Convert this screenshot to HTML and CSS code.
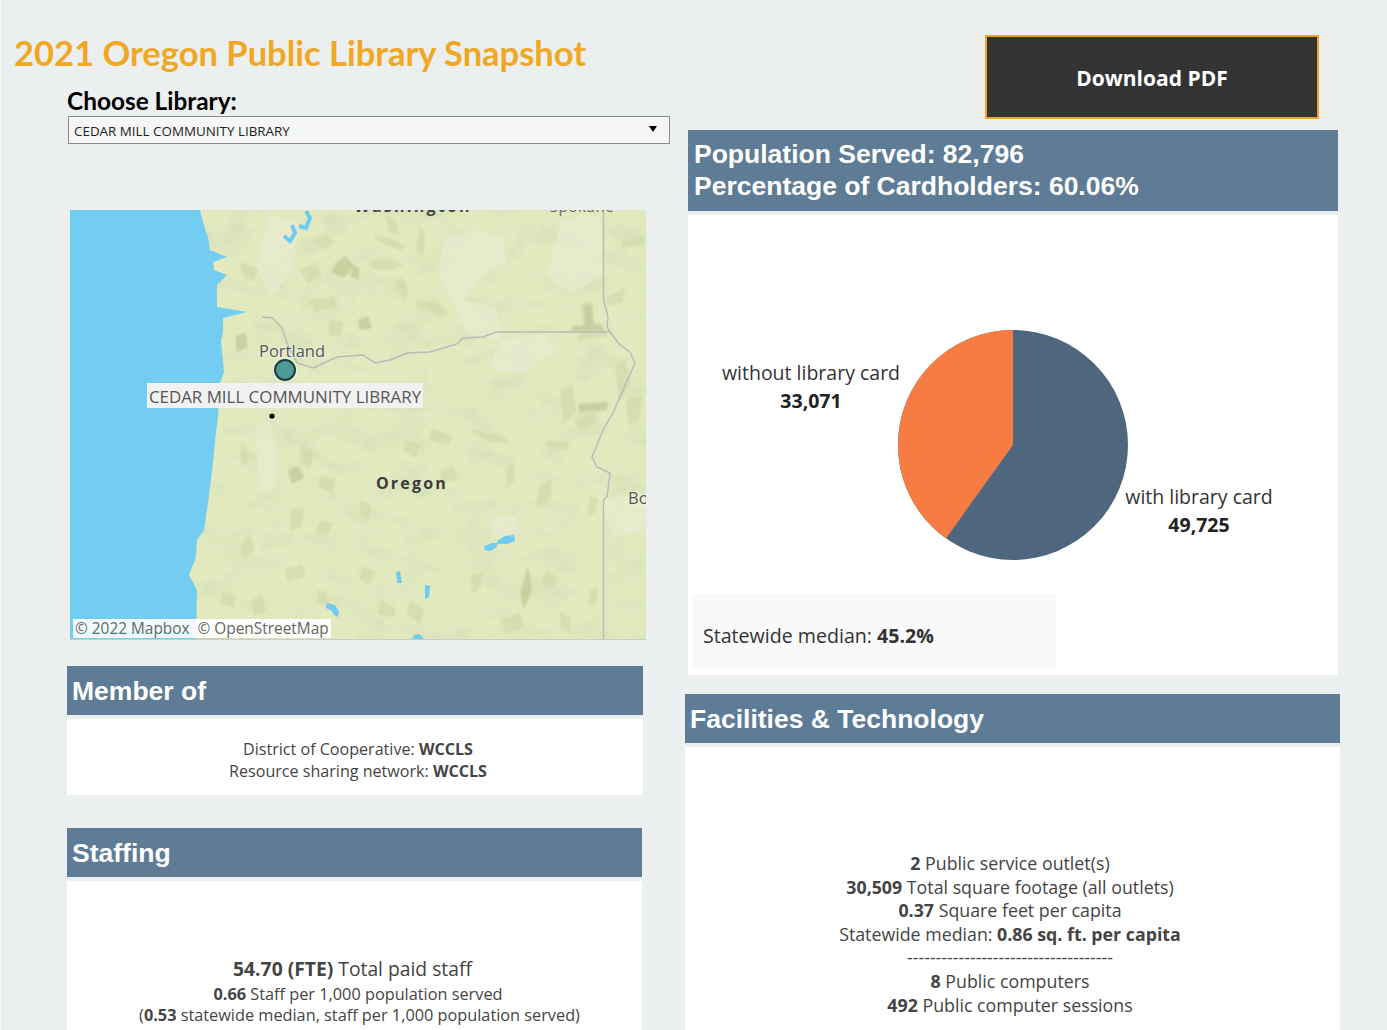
FILE: index.html
```html
<!DOCTYPE html>
<html lang="en">
<head>
<meta charset="utf-8">
<title>2021 Oregon Public Library Snapshot</title>
<link rel="stylesheet" href="styles.css">
</head>
<body>
<div class="page">
  <div class="left">
    <h1 class="title">2021 Oregon Public Library Snapshot</h1>
    <div class="filter">
      <div class="filter-label">Choose Library:</div>
      <div class="select"><span>CEDAR MILL COMMUNITY LIBRARY</span><i class="caret"></i></div>
    </div>
    <div class="map">
      <svg class="map-svg" viewBox="70 210 576 430" width="576" height="430">
        <defs>
          <filter id="soft"><feGaussianBlur stdDeviation="0.8"/></filter>
          <filter id="terrain" x="0" y="0" width="100%" height="100%">
            <feTurbulence type="fractalNoise" baseFrequency="0.028 0.04" numOctaves="3" seed="11"/>
            <feColorMatrix type="matrix" values="0 0 0 0 0.62  0 0 0 0 0.68  0 0 0 0 0.44  2.4 0 0 0 -0.95"/>
            <feComponentTransfer>
              <feFuncA type="discrete" tableValues="0 0 0.1 0.2 0.3 0.42"/>
            </feComponentTransfer>
            <feGaussianBlur stdDeviation="0.6"/>
          </filter>
        </defs>
        <rect x="70" y="210" width="576" height="430" fill="#e2e9bf"/>
        <rect x="70" y="210" width="576" height="430" filter="url(#terrain)"/>
        <g filter="url(#soft)">
          <g fill="#e9ebd0" opacity=".75">
            <path d="M445 238l35-8 24 10 2 22-28 14-14 24 32 8 6 32-34-6-16-32-14-28z"/>
            <path d="M560 220l40-5 4 60-32 18-24-14z"/>
            <path d="M270 215l30 10-10 50-20 20-14-28z"/>
            <path d="M600 500l46-8v38l-32 8z"/>
            <path d="M490 520l25-4 8 16-24 6z"/>
            <path d="M256 430l14-10 8 40-6 32-14-4z"/>
            <path d="M500 340l40-6 16 16-36 24-30-6z"/>
          </g>
          <g fill="#d0d9aa" opacity=".65">
            <path d="M373 233l20 6 14 8-6 4-24-10z"/>
            <path d="M385 215l10 4 4 16-10-2z"/>
            <path d="M420 225l6 12-4 22-6-14z"/>
            <path d="M368 262l16-4 20 6-10 6-22-1z"/>
            <path d="M416 300l20 2 14 12-8 2-24-8z"/>
            <path d="M395 282l8-6 6 18-6 6z"/>
            <path d="M312 240l14-6 10 8-12 8z"/>
            <path d="M300 270l16-8 6 14-14 8z"/>
            <path d="M240 262l18 6-4 14-12-6z"/>
            <path d="M310 300l24-4 4 10-24 6z"/>
            <path d="M330 320l14 2-4 16-12-4z"/>
            <path d="M578 330l26-2 4 8-30 4z"/>
            <path d="M580 305l8-4 4 22-8 6z"/>
            <path d="M620 240l24-4v10l-22 2z"/>
            <path d="M605 298l20-10-2 14-16 4z"/>
            <path d="M615 365l10-6 6 24-12 20z"/>
            <path d="M560 390l12-6 4 26-12 14z"/>
            <path d="M575 420l20-8 2 10-18 8z"/>
            <path d="M545 440l24 2-2 8-20-2z"/>
            <path d="M625 400l18-4-4 26-10 4z"/>
            <path d="M470 430l30 4 12 10-24-2z"/>
            <path d="M432 428l20 8-4 10-20-6z"/>
            <path d="M505 470l8-8 2 18-8 8z"/>
            <path d="M540 484l12-4-2 20-14 8z"/>
            <path d="M590 495l8 4-2 14-10 2z"/>
            <path d="M405 440l16 4-6 14-12-8z"/>
            <path d="M300 445l14 6-4 18-10-8z"/>
            <path d="M320 475l16 4-4 14-14-6z"/>
            <path d="M242 440l8 16-6 12-4-14z"/>
            <path d="M240 545l10-12 4 16-10 12z"/>
            <path d="M290 510l14-4-2 20-12 6z"/>
            <path d="M320 520l14 4-8 12-10-4z"/>
            <path d="M284 570l18-6 4 12-18 6z"/>
            <path d="M222 590l14 4-2 14-14-4z"/>
            <path d="M250 600l12-6 4 18-12 4z"/>
            <path d="M316 590l10 2 4 14-12-2z"/>
            <path d="M364 565l12 8-8 12-10-8z"/>
            <path d="M410 600l14 10-4 14-14-10z"/>
            <path d="M380 600l16 8-2 10-16-4z"/>
            <path d="M470 575l14-2-4 16-8 4z"/>
            <path d="M545 570l14 8-6 10-12-4z"/>
            <path d="M590 590l8-2-2 16-8 2z"/>
            <path d="M500 620l20-8 6 16-20 6z"/>
            <path d="M560 610l10 8 2 18-12-10z"/>
            <path d="M440 470l14-4 4 14-16 2z"/>
            <path d="M360 500l12 6-4 16-8-8z"/>
          </g>
          <g fill="#c2cb99" opacity=".8">
            <path d="M336 262l10-6 8 10-10 12-12-6z"/>
            <path d="M358 320l10-4 4 12-12 2z"/>
            <path d="M520 595l8-30 4 26-8 18z"/>
            <path d="M578 404l30-2-2 8-26 2z"/>
            <path d="M288 470l10-4 6 12-12 6z"/>
            <path d="M236 335l10-2 2 14-12 6z"/>
            <path d="M354 264l6 6-2 10-8-4z"/>
            <path d="M196 625l30 2 4 13h-34z"/>
            <path d="M584 305l8-2 2 22-8 4z"/>
            <path d="M572 326l30-2 2 6-32 2z"/>
          </g>
        </g>
        <path class="ocean" d="M70 210H200L203 222L208 237L210 250L227 257L213 262L214 270L227 275L217 285L217 307L247 312L223 318L223 333L221 340L222 352L224 372L220 383L218 417L215 440L213 463L208 503L204 530L197 540L196 557L189 575L197 590L196 640H70Z"/>
        <path class="river" d="M284 236l6 5 5-8-3-8M299 226l7 2 4-10-4-7"/>
        <path class="water" d="M484 546l8-3 6 0-2 5-6 3-5-1z"/>
        <path class="water" d="M497 541l8-5 9-1 1 6-8 3-9 0z"/>
        <path class="water" d="M396 572l4-1 2 12-5 0z"/>
        <path class="water" d="M425 585l5 1-1 11-4 2z"/>
        <path class="water" d="M327 603l8 2 4 6-1 6-4-2-2-4-6-3z"/>
        <path class="water" d="M412 640l2-5 5-1 4 3 0 3z"/>
        <g class="borders">
          <path d="M603.5 211V300L608 317L607 327L610 332L620 345L630 352L635 363L623 390L613 413L603 430L592 457L597 467L610 473L607 497L603.5 500V640"/>
          <path d="M610 332H496L483 337L463 338L457 344L430 352L407 353L390 360L375 363L363 355L337 357L313 368L297 363L287 343L282 328L273 318L262 317"/>
        </g>
        <text class="city" x="292" y="357" text-anchor="middle">Portland</text>
        <circle class="halo" cx="285" cy="370" r="12"/>
        <circle class="marker" cx="285" cy="370" r="10"/>
        <rect class="label-bg" x="147" y="383" width="276" height="25"/>
        <text class="label" x="285" y="403" text-anchor="middle">CEDAR MILL COMMUNITY LIBRARY</text>
        <circle cx="272" cy="416" r="2.6" fill="#000"/>
        <text class="state" x="412" y="489" text-anchor="middle">Oregon</text>
        <text class="city" x="628" y="504">Bo</text>
        <text class="clipped" x="413" y="212" text-anchor="middle">Washington</text>
        <text class="clipped-small" x="582" y="212" text-anchor="middle">Spokane</text>
        <rect x="73" y="619" width="258" height="19" fill="#fff" opacity=".9"/>
        <text class="attr" x="75" y="634">© 2022 Mapbox  © OpenStreetMap</text>
        <path d="M70 639.5H646" stroke="#c9cdc9"/>
      </svg>
    </div>
    <section class="member">
      <h2 class="band">Member of</h2>
      <div class="panel member-body">
        <p>District of Cooperative: <b>WCCLS</b></p>
        <p>Resource sharing network: <b>WCCLS</b></p>
      </div>
    </section>
    <section class="staffing">
      <h2 class="band">Staffing</h2>
      <div class="panel staffing-body">
        <p class="lead"><b>54.70 (FTE)</b> Total paid staff</p>
        <p class="row-mid"><b>0.66</b> Staff per 1,000 population served</p>
        <p class="row-last">(<b>0.53</b> statewide median, staff per 1,000 population served)</p>
      </div>
    </section>
  </div>
  <div class="right">
    <div class="button-row"><a class="download">Download PDF</a></div>
    <section class="population">
      <h2 class="band two-line">Population Served: 82,796<br>Percentage of Cardholders: 60.06%</h2>
      <div class="panel pie-panel">
        <svg class="pie" viewBox="0 0 650 370" width="650" height="370">
          <circle cx="325" cy="230" r="115" fill="#4f677e"/>
          <path d="M325 230V115A115 115 0 0 0 257.9 323.4Z" fill="#f67c43"/>
          <text class="pie-label" x="123" y="165" text-anchor="middle">without library card</text>
          <text class="pie-value" x="123" y="193" text-anchor="middle">33,071</text>
          <text class="pie-label" x="511" y="289" text-anchor="middle">with library card</text>
          <text class="pie-value" x="511" y="317" text-anchor="middle">49,725</text>
        </svg>
        <div class="median">Statewide median: <b>45.2%</b></div>
      </div>
    </section>
    <section class="facilities">
      <h2 class="band">Facilities &amp; Technology</h2>
      <div class="panel facilities-body">
        <p><b>2</b> Public service outlet(s)</p>
        <p><b>30,509</b> Total square footage (all outlets)</p>
        <p><b>0.37</b> Square feet per capita</p>
        <p>Statewide median: <b>0.86 sq. ft. per capita</b></p>
        <p>------------------------------------</p>
        <p><b>8</b> Public computers</p>
        <p><b>492</b> Public computer sessions</p>
      </div>
    </section>
  </div>
</div>
</body>
</html>
```
FILE: styles.css
```css
* { box-sizing: border-box; }
html, body { margin: 0; padding: 0; height: 100%; overflow: hidden; }
body { background: #ebeff0; font-family: "Open Sans", "Noto Sans", sans-serif; color: #444; }
p, h1, h2 { margin: 0; }
.page { display: flex; height: 1030px; overflow: hidden; border-left: 1px solid #f6f7f7; }
.left { width: 683px; flex: none; }
.right { width: 703px; flex: none; }

.title { margin: 33px 0 0 13px; font: 700 34.5px/40px Lato, sans-serif; color: #f0a722; white-space: nowrap; }
.filter { margin: 13px 0 0 66px; width: 603px; }
.filter-label { font: 700 24.4px/30px Lato, sans-serif; color: #000; }
.select { display: flex; justify-content: space-between; align-items: center; height: 28px; margin-left: 1px; padding: 1px 11px 0 5px; background: #f5f6f6; border: 1px solid #8c8c8c; font-size: 13.4px; color: #222; }
.caret { width: 0; height: 0; border-left: 4px solid transparent; border-right: 4px solid transparent; border-top: 6px solid #000; margin: 0 1px 4px 0; }

.map { margin: 66px 0 0 69px; width: 576px; height: 430px; }
.map-svg { display: block; }
.ocean { fill: #72cdf1; }
.water { fill: #6fcbf0; }
.river { fill: none; stroke: #6fcbf0; stroke-width: 4; }
.borders path { fill: none; stroke: #b4bcbb; stroke-width: 1.4; }
.city { font: 16.5px "Open Sans", sans-serif; fill: #555; paint-order: stroke; stroke: rgba(255,255,255,.45); stroke-width: 2px; }
.halo { fill: rgba(255,255,255,.5); }
.marker { fill: #4e9a94; stroke: #1d3b3c; stroke-width: 2; }
.label-bg { fill: #f0f2f1; }
.label { font: 16.9px "Open Sans", sans-serif; fill: #555; }
.state { font: 700 16px "Open Sans", sans-serif; fill: #3a3a3a; letter-spacing: 2.2px; }
.clipped { font: 700 16px "Open Sans", sans-serif; fill: #444; letter-spacing: 2.2px; }
.clipped-small { font: 15px "Open Sans", sans-serif; fill: #666; letter-spacing: .6px; }
.attr { font: 15.4px "Open Sans", sans-serif; fill: #666; white-space: pre; }

.band { background: #5e7c95; color: #fff; font: 700 26.5px/51px "Liberation Sans", Arial, sans-serif; padding-left: 5px; height: 49px; }
.panel { background: #fff; margin-top: 4px; text-align: center; }

.member { margin: 26px 0 0 66px; width: 576px; }
.member-body { height: 76px; padding: 19px 0 0 6px; font-size: 16.1px; line-height: 22px; }
.staffing { margin: 33px 0 0 66px; width: 575px; }
.staffing-body { height: 200px; padding-top: 73px; font-size: 16.3px; line-height: 21px; }
.staffing-body p { white-space: nowrap; }
.staffing-body .lead { font-size: 19.3px; line-height: 29px; padding-right: 4px; margin-bottom: 1px; }
.staffing-body .row-mid { padding-left: 7px; }
.staffing-body .row-last { padding-left: 10px; }

.button-row { display: flex; margin: 35px 0 0 301px; }
.download { display: flex; align-items: center; justify-content: center; width: 334px; height: 84px; padding-top: 2px; background: #333; border: 2px solid #eba51e; color: #fff; font: 700 21px/1 "Open Sans", sans-serif; }

.population { margin: 11px 0 0 4px; width: 650px; }
.two-line { height: 81px; padding: 8px 0 0 6px; line-height: 32px; }
.pie-panel { height: 460px; padding-left: 4px; text-align: left; position: relative; }
.pie { position: absolute; left: 0; top: 0; }
.pie-label { font: 19.5px "Open Sans", sans-serif; fill: #333; }
.pie-value { font: 700 19.5px "Open Sans", sans-serif; fill: #222; }
.median { position: absolute; left: 4px; top: 379px; width: 364px; height: 75px; padding: 29px 0 0 11px; background: #f9f9f9; font-size: 19.6px; line-height: 26px; color: #333; }

.facilities { margin: 19px 0 0 1px; width: 655px; }
.facilities-body { height: 283px; padding: 105px 5px 0 0; font-size: 17.8px; line-height: 23.6px; }
```
